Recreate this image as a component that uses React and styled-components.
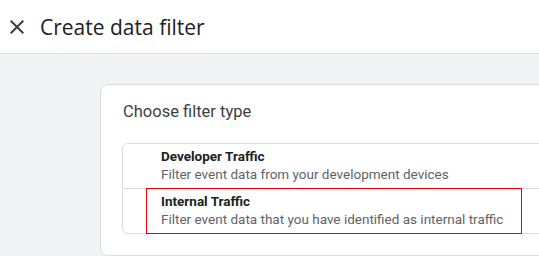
import React from 'react';
import styled, { createGlobalStyle } from 'styled-components';

const GlobalStyle = createGlobalStyle`
	html, body {
		margin: 0;
		padding: 0;
		width: 539px;
		height: 256px;
		overflow: hidden;
		background-color: #f1f3f4;
		font-family: Roboto, 'Liberation Sans', sans-serif;
	}
`;

const options = [
	{ title: 'Developer Traffic', text: 'Filter event data from your development devices' },
	{ title: 'Internal Traffic', text: 'Filter event data that you have identified as internal traffic', marked: true },
];

const App = () => {
	return (
		<Page>
			<GlobalStyle />
			<Header>
				<CloseButton aria-label='Close'>
					<svg width='24' height='24' viewBox='0 0 24 24'>
						<path
							d='M19 6.41 17.59 5 12 10.59 6.41 5 5 6.41 10.59 12 5 17.59 6.41 19 12 13.41 17.59 19 19 17.59 13.41 12z'
							fill='#3c4043'
						/>
					</svg>
				</CloseButton>
				<Title>Create data filter</Title>
			</Header>
			<Body>
				<Card>
					<CardHeading>Choose filter type</CardHeading>
					<OptionList>
						{options.map((option) => (
							<Option key={option.title}>
								<OptionTitle>{option.title}</OptionTitle>
								<OptionText>{option.text}</OptionText>
								{option.marked && <Highlight />}
							</Option>
						))}
					</OptionList>
				</Card>
			</Body>
		</Page>
	);
};

const Page = styled.div`
	display: flex;
	flex-direction: column;
	width: 539px;
	height: 256px;
	overflow: hidden;
`;

const Header = styled.header`
	height: 53px;
	background-color: #fff;
	border-bottom: 1px solid #dadce0;
	display: flex;
	align-items: center;
	padding-left: 5px;
	gap: 11px;
	flex-shrink: 0;
`;

const CloseButton = styled.button`
	width: 24px;
	height: 24px;
	padding: 0;
	border: none;
	background: none;
	display: flex;
	margin-top: 1px;
	svg {
		display: block;
	}
`;

const Title = styled.h1`
	margin: 0;
	font-family: 'Open Sans', sans-serif;
	font-size: 21px;
	font-weight: 400;
	color: #202124;
`;

const Body = styled.main`
	flex: 1;
	min-height: 0;
	overflow: hidden;
	padding: 30px 0 0 100px;
`;

const Card = styled.section`
	width: 560px;
	height: 172px;
	background-color: #fff;
	border: 1px solid #dadce0;
	border-radius: 8px;
	padding: 15px 0 0 22px;
	box-sizing: border-box;
`;

const CardHeading = styled.h2`
	margin: 0 0 19px;
	font-size: 16.5px;
	line-height: 24px;
	font-weight: 400;
	color: #3c4043;
`;

const OptionList = styled.div`
	border: 1px solid #dadce0;
	border-radius: 6px;
	display: flex;
	flex-direction: column;
	margin-left: -1px;
`;

const Option = styled.div`
	position: relative;
	padding: 3px 0 5px 38px;
	& + & {
		border-top: 1px solid #dadce0;
	}
`;

const OptionTitle = styled.div`
	font-size: 13.5px;
	line-height: 19px;
	font-weight: 700;
	color: #202124;
`;

const OptionText = styled.div`
	font-size: 13.5px;
	line-height: 17px;
	color: #5f6368;
`;

const Highlight = styled.div`
	position: absolute;
	left: 23px;
	top: -1px;
	width: 376px;
	bottom: -1px;
	border: 1px solid #e8000b;
	box-sizing: border-box;
	pointer-events: none;
`;

export default App;
